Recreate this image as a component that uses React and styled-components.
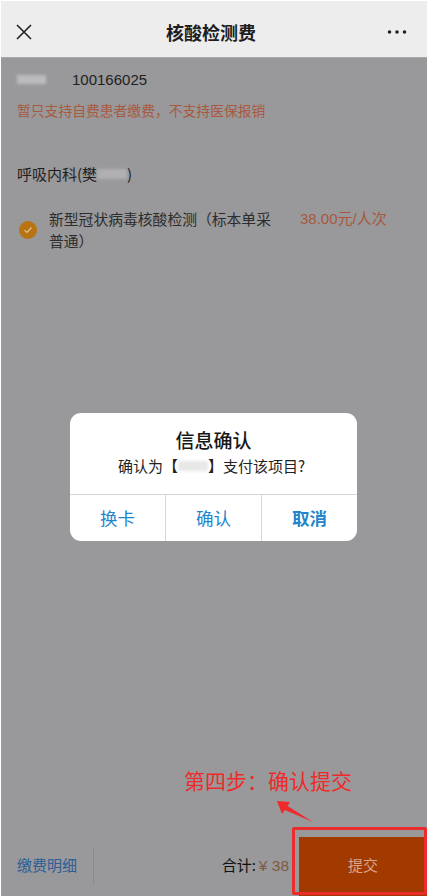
import React from "react";
import styled, { createGlobalStyle } from "styled-components";

const Global = createGlobalStyle`
  html, body { margin: 0; padding: 0; background: #fff; }
  body { font-family: "Liberation Sans", "Noto Sans CJK SC", sans-serif; }
  * { box-sizing: border-box; }
`;
const Page = styled.div`
  position: relative; width: 428px; height: 896px; padding: 1px 1px 0 1px; overflow: hidden;
  display: flex; flex-direction: column; background: #fff;
`;
const Header = styled.header`
  height: 57px; flex: none; background: #ededed; display: flex; align-items: center;
  justify-content: space-between; padding: 5px 20px 0 14px; border-bottom: 1px solid #aaa;
`;
const Title = styled.h1`
  margin: 0; font-size: 18px; font-weight: 700; color: #1d1d1d; letter-spacing: 0; line-height: 24px;
  font-family: "Noto Sans CJK SC", sans-serif; position: relative; left: 1px;
`;
const Body = styled.main`
  flex: 1; background: #99989a; padding: 12px 16px 0; display: flex; flex-direction: column; min-height: 0;
`;
const IdRow = styled.div`
  display: flex; align-items: center; height: 20px; padding-bottom: 2px; font-size: 15px; color: #1f1f1f;
`;
const Smudge = styled.span`
  display: inline-block; width: ${p => p.$w}px; height: ${p => p.$h}px;
  background: ${p => p.$c}; filter: blur(1.5px); flex: none;
`;
const IdNumber = styled.span` margin-left: 26px; `;
const Notice = styled.p`
  margin: 10px 0 0; font-size: 13.8px; line-height: 20px; color: #a9593f;
  font-family: "Noto Sans CJK SC", sans-serif;
`;
const Dept = styled.div`
  margin-top: 44px; display: flex; align-items: center; font-size: 15px; line-height: 20px; color: #1f1f1f;
  font-family: "Noto Sans CJK SC", sans-serif;
`;
const Item = styled.div`
  margin-top: 23px; display: flex; align-items: center;
`;
const Check = styled.span`
  width: 18px; height: 18px; border-radius: 50%; background: #b87412; flex: none; margin-left: 2px;
  display: flex; align-items: center; justify-content: center;
`;
const ItemName = styled.div`
  width: 226px; margin-left: 12px; padding-top: 1px; font-size: 14.8px; line-height: 22px; color: #2c2c2c;
  font-family: "Noto Sans CJK SC", sans-serif;
`;
const Price = styled.div`
  margin-left: 25px; padding-top: 1px; align-self: flex-start; font-size: 15px; line-height: 22px; color: #a5583f; white-space: nowrap;
  font-family: "Liberation Sans", "Noto Sans CJK SC", sans-serif;
`;
const Footer = styled.footer`
  margin-top: auto; height: 60px; flex: none; background: #99989a; display: flex; align-items: center; margin-left: -16px; margin-right: -16px;
`;
const DetailLink = styled.div`
  width: 93px; height: 38px; padding-left: 16px; padding-bottom: 3px; display: flex; align-items: center; font-size: 15px; color: #2c5f97;
  border-right: 1px solid #8a898b; font-family: "Noto Sans CJK SC", sans-serif;
`;
const Total = styled.div`
  margin-left: auto; margin-right: 10px; padding-bottom: 4px; font-size: 15px; color: #111; display: flex; align-items: baseline;
  font-family: "Noto Sans CJK SC", sans-serif;
`;
const Amount = styled.span` color: #7d5a3e; margin-left: 3px; font-family: "Liberation Sans", "Noto Sans CJK SC", sans-serif; font-size: 15.5px; `;
const Submit = styled.div`
  width: 128px; height: 59px; background: #a23a00; color: #d9a68e; font-size: 15px; display: flex; align-items: center;
  justify-content: center; font-family: "Noto Sans CJK SC", sans-serif; align-self: flex-end; padding-bottom: 4px;
`;
const Dialog = styled.section`
  position: absolute; left: 70px; top: 413px; width: 287px; height: 128px; background: #fff; border-radius: 11px;
  overflow: hidden; display: flex; flex-direction: column; font-family: "Noto Sans CJK SC", sans-serif;
`;
const DialogBody = styled.div`
  height: 82px; flex: none; display: flex; flex-direction: column; align-items: center; border-bottom: 1px solid #d6d6d6; padding-top: 13px;
`;
const DialogTitle = styled.div` font-size: 19px; line-height: 27px; color: #161616; font-weight: 500; `;
const DialogText = styled.div` font-size: 15px; line-height: 20px; color: #222; margin-top: 3px; padding-right: 4px; display: flex; align-items: center; `;
const DialogActions = styled.div` flex: 1; display: grid; grid-template-columns: 95px 96px 1fr; `;
const Action = styled.div`
  display: flex; align-items: center; justify-content: center; font-size: 17.5px; color: #2585cc; padding-bottom: 1px;
  font-weight: ${p => (p.$bold ? 700 : 400)};
  & + & { border-left: 1px solid #d6d6d6; }
`;
const Annotation = styled.div`
  position: absolute; left: 184px; top: 767px; font-size: 21px; line-height: 27px; color: #ee2a2a;
  font-family: "Noto Sans CJK SC", sans-serif; white-space: nowrap;
`;
const Arrow = styled.svg` position: absolute; left: 274px; top: 798px; `;
const Highlight = styled.div`
  position: absolute; left: 292px; top: 827px; width: 135px; height: 68px; border: 3px solid #ea2c2c; border-radius: 2px;
`;

export default function App() {
  return (
    <Page>
      <Global />
      <Header>
        <svg width="18" height="18" viewBox="0 0 18 18" fill="none" stroke="#222" strokeWidth="1.6">
          <path d="M2 2l14 14M16 2L2 16" />
        </svg>
        <Title>核酸检测费</Title>
        <svg width="20" height="6" viewBox="0 0 20 6" fill="#222">
          <circle cx="2.5" cy="3" r="1.8" /><circle cx="10" cy="3" r="1.8" /><circle cx="17.5" cy="3" r="1.8" />
        </svg>
      </Header>
      <Body>
        <IdRow>
          <Smudge $w={29} $h={9} $c="#bcbcbe" />
          <IdNumber>100166025</IdNumber>
        </IdRow>
        <Notice>暂只支持自费患者缴费，不支持医保报销</Notice>
        <Dept>
          呼吸内科(樊<Smudge $w={30} $h={10} $c="#b0b0b2" />)
        </Dept>
        <Item>
          <Check>
            <svg width="10" height="8" viewBox="0 0 10 8" fill="none" stroke="#e0c9a0" strokeWidth="1.1">
              <path d="M1.5 4.2l2.4 2.2L8.5 1.5" />
            </svg>
          </Check>
          <ItemName>新型冠状病毒核酸检测（标本单采普通）</ItemName>
          <Price>38.00元/人次</Price>
        </Item>
        <Footer>
          <DetailLink>缴费明细</DetailLink>
          <Total>合计:<Amount>¥ 38</Amount></Total>
          <Submit>提交</Submit>
        </Footer>
      </Body>
      <Dialog>
        <DialogBody>
          <DialogTitle>信息确认</DialogTitle>
          <DialogText>确认为【<Smudge $w={30} $h={10} $c="#e8e8e8" />】支付该项目?</DialogText>
        </DialogBody>
        <DialogActions>
          <Action>换卡</Action>
          <Action>确认</Action>
          <Action $bold>取消</Action>
        </DialogActions>
      </Dialog>
      <Annotation>第四步：确认提交</Annotation>
      <Arrow width="40" height="28" viewBox="0 0 40 28">
        <path d="M3 3l13 1-2.5 4L39 24 11 12l-3 4z" fill="#ee2a2a" />
      </Arrow>
      <Highlight />
    </Page>
  );
}
